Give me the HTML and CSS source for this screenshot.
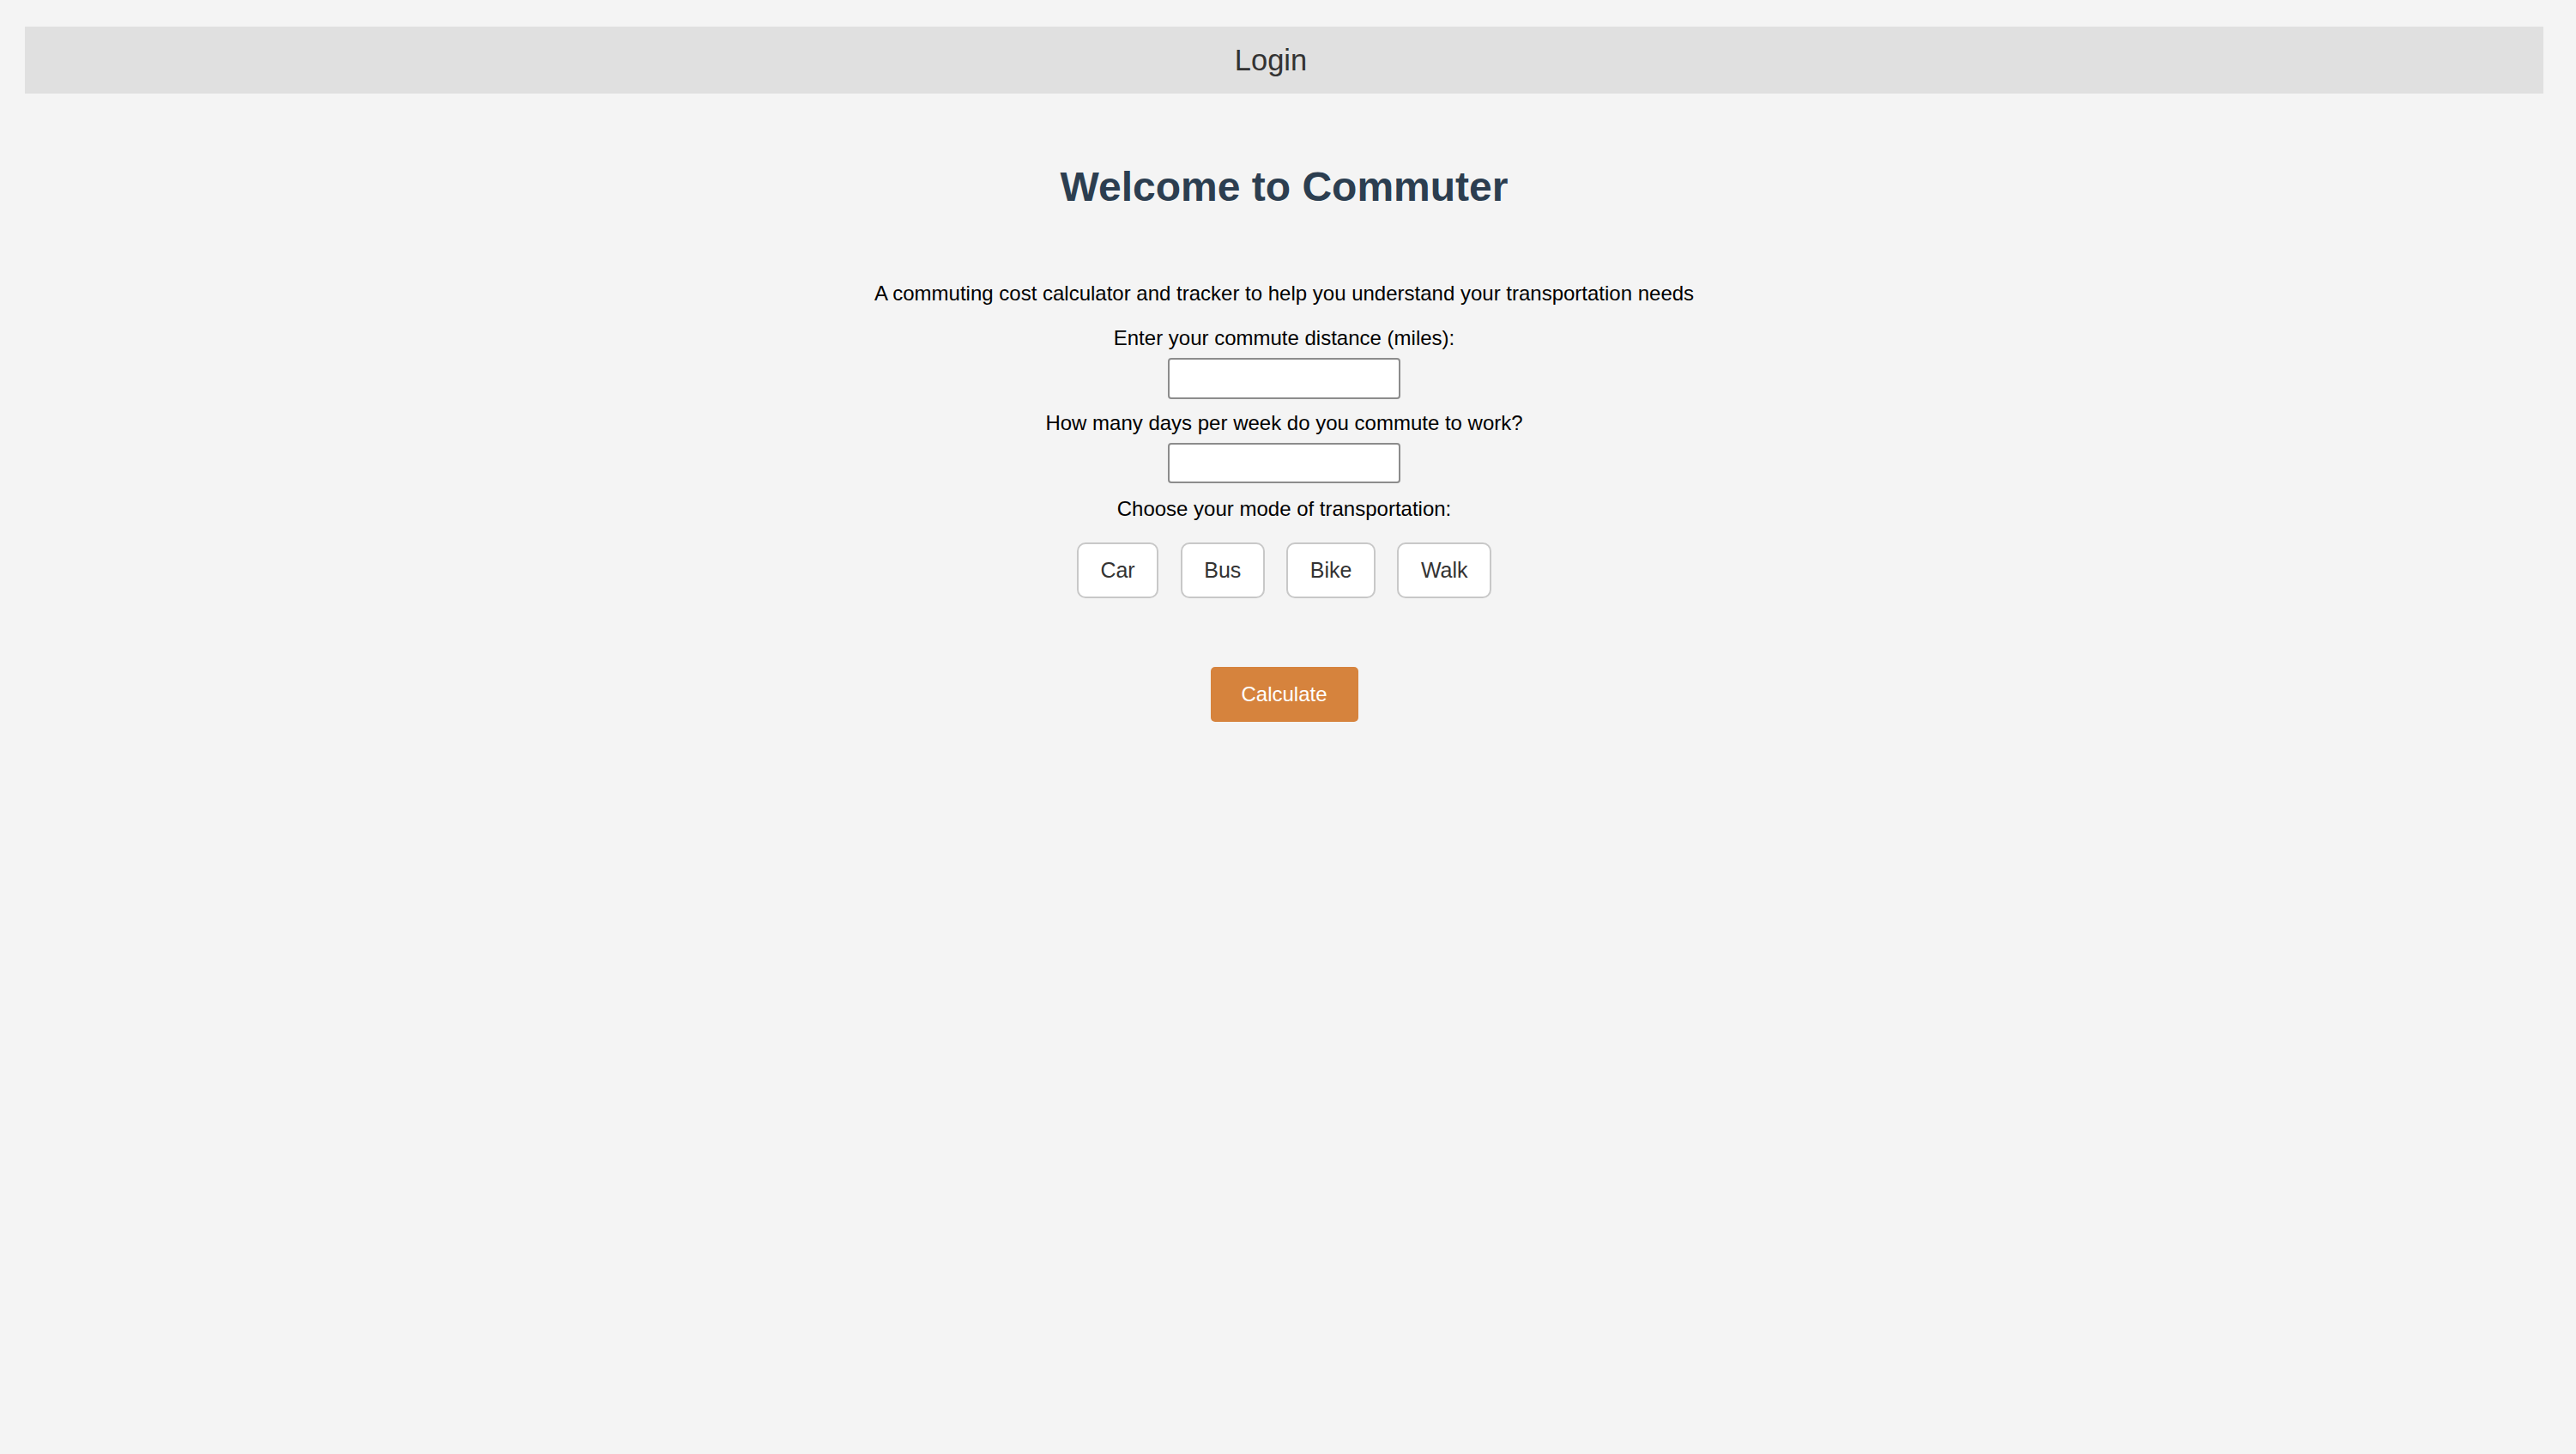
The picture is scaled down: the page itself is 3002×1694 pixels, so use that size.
FILE: index.html
```html
<!DOCTYPE html>
<html lang="en">
<head>
<meta charset="utf-8">
<title>Commuter</title>
<link rel="stylesheet" href="styles.css">
</head>
<body>
<header class="topbar">
  <span class="login">Login</span>
</header>
<main class="content">
  <h1 class="title">Welcome to Commuter</h1>
  <p class="desc">A commuting cost calculator and tracker to help you understand your transportation needs</p>
  <label class="field-label" for="distance">Enter your commute distance (miles):</label>
  <input class="field-input" id="distance" type="text">
  <label class="field-label gap-top" for="days">How many days per week do you commute to work?</label>
  <input class="field-input" id="days" type="text">
  <label class="field-label gap-mode">Choose your mode of transportation:</label>
  <div class="modes">
    <button class="mode">Car</button>
    <button class="mode">Bus</button>
    <button class="mode">Bike</button>
    <button class="mode">Walk</button>
  </div>
  <button class="calc">Calculate</button>
</main>
</body>
</html>
```
FILE: styles.css
```css
html, body {
  margin: 0;
  padding: 0;
  background: #f4f4f4;
}
body {
  padding: 31px 38px 0 29px;
  font-family: "Liberation Sans", Arial, Helvetica, sans-serif;
  color: #000;
}
.topbar {
  height: 78px;
  background: #e0e0e0;
  display: flex;
  align-items: center;
  justify-content: center;
  padding-right: 31px;
}
.login {
  font-size: 34.5px;
  color: #333;
  line-height: normal;
}
.content {
  display: flex;
  flex-direction: column;
  align-items: center;
  text-align: center;
}
.title {
  margin: 81px 0 0;
  font-size: 48px;
  font-weight: bold;
  line-height: normal;
  color: #2c3e50;
}
.desc {
  margin: 83px 0 0;
  font-size: 24px;
  line-height: normal;
}
.field-label {
  display: block;
  margin-top: 24px;
  font-size: 24px;
  line-height: normal;
}
.field-label.gap-top {
  margin-top: 14px;
}
.field-label.gap-mode {
  margin-top: 16px;
}
.field-input {
  box-sizing: border-box;
  width: 271px;
  height: 47.5px;
  margin-top: 9px;
  border: 2px solid #8c8c8c;
  border-radius: 4px;
  background: #fff;
  font-size: 24px;
  padding: 2px 6px;
}
.modes {
  display: flex;
  gap: 25.5px;
  margin-top: 24.5px;
}
.mode {
  box-sizing: border-box;
  height: 65px;
  padding: 0 25.5px;
  border: 2.5px solid #c8c8c8;
  border-radius: 10px;
  background: #fff;
  color: #333;
  font-family: "Liberation Sans", Arial, Helvetica, sans-serif;
  font-size: 25px;
}
.calc {
  box-sizing: border-box;
  width: 172px;
  height: 64px;
  margin-top: 80px;
  border: none;
  border-radius: 5px;
  background: #d6833d;
  color: #fff;
  font-family: "Liberation Sans", Arial, Helvetica, sans-serif;
  font-size: 24px;
}
```
